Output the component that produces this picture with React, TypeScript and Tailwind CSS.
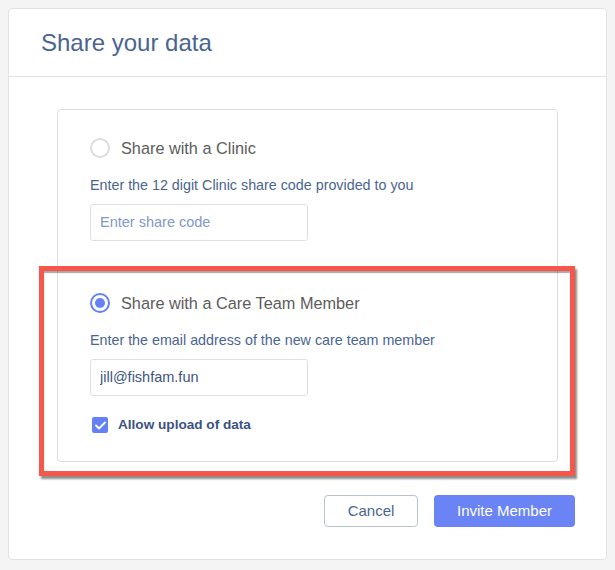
import { useState } from 'react';

function Radio({ checked }: { checked: boolean }) {
  return (
    <span
      className={`flex h-5 w-5 shrink-0 items-center justify-center rounded-full border-2 ${
        checked ? 'border-[#6482f5]' : 'border-[#dcdcdc]'
      }`}
    >
      {checked && <span className="h-[10px] w-[10px] rounded-full bg-[#6482f5]" />}
    </span>
  );
}

export default function App() {
  const [mode, setMode] = useState<'clinic' | 'member'>('member');
  const [email, setEmail] = useState('jill@fishfam.fun');
  const [allowUpload, setAllowUpload] = useState(true);

  return (
    <div className="relative min-h-screen bg-[#f4f4f4] p-2 font-['Liberation_Sans',Arial,sans-serif]">
      <div className="flex h-[552px] w-[599px] flex-col rounded-[4px] border border-[#e2e2e2] bg-white">
        {/* header */}
        <div className="flex h-[68px] items-center border-b border-[#e2e2e2] px-[32px]">
          <h1 className="text-[24px] text-[#4a6591]">Share your data</h1>
        </div>

        {/* body */}
        <div className="px-[48px] pt-[32px]">
          <div className="flex h-[353px] flex-col rounded-[4px] border border-[#dedede]">
            {/* clinic */}
            <div className="h-[157px] px-[32px] pt-[26px]">
              <button onClick={() => setMode('clinic')} className="flex items-center gap-[11px]">
                <Radio checked={mode === 'clinic'} />
                <span className="text-[16.3px] text-[#5c5c5c]">Share with a Clinic</span>
              </button>
              <p className="mt-[15px] text-[14.3px] text-[#4a6591]">
                Enter the 12 digit Clinic share code provided to you
              </p>
              <input
                placeholder="Enter share code"
                className="mt-[7px] h-[37px] w-[218px] rounded-[3px] border border-[#dfdfdf] px-[9px] text-[14.5px] text-[#3d5580] outline-none placeholder:text-[#8299c8]"
              />
            </div>

            {/* care team member */}
            <div className="flex-1 border-t border-[#dedede] px-[32px] pt-[23px]">
              <button onClick={() => setMode('member')} className="flex items-center gap-[11px]">
                <Radio checked={mode === 'member'} />
                <span className="text-[16.3px] text-[#5c5c5c]">Share with a Care Team Member</span>
              </button>
              <p className="mt-[15px] text-[14.3px] text-[#4a6591]">
                Enter the email address of the new care team member
              </p>
              <input
                value={email}
                onChange={e => setEmail(e.target.value)}
                className="mt-[7px] h-[37px] w-[218px] rounded-[3px] border border-[#dfdfdf] px-[9px] text-[14.5px] text-[#3d5580] outline-none"
              />
              <label className="mt-[19px] flex items-center gap-[10px]">
                <button
                  onClick={() => setAllowUpload(v => !v)}
                  className={`ml-[2px] flex h-4 w-4 items-center justify-center rounded-[2px] ${
                    allowUpload ? 'bg-[#6482f5]' : 'border border-[#ccc] bg-white'
                  }`}
                >
                  {allowUpload && (
                    <svg width="11" height="9" viewBox="0 0 11 9" fill="none">
                      <path d="M1 4.5L4 7.5L10 1.5" stroke="white" strokeWidth="1.8" strokeLinecap="round" strokeLinejoin="round" />
                    </svg>
                  )}
                </button>
                <span className="text-[13.6px] font-bold text-[#3b5282]">Allow upload of data</span>
              </label>
            </div>
          </div>
        </div>

        {/* footer */}
        <div className="flex justify-end gap-4 pr-[31px] pt-[33px]">
          <button className="h-[32px] w-[94px] rounded-[4px] border border-[#b8c2d2] text-[15px] text-[#4a6591]">
            Cancel
          </button>
          <button className="h-[32px] w-[141px] rounded-[4px] bg-[#6a84f6] text-[15px] text-white">
            Invite Member
          </button>
        </div>
      </div>

      {/* annotation highlight */}
      <div className="pointer-events-none absolute left-[39px] top-[266px] h-[210px] w-[536px] border-[5px] border-[#f6574a] shadow-[2px_3px_2px_rgba(0,0,0,0.45),inset_0_2px_1px_rgba(0,0,0,0.35)]" />
    </div>
  );
}
